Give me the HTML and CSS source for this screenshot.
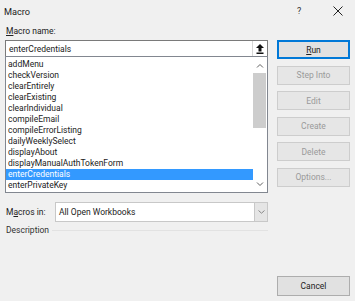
FILE: index.html
```html
<!DOCTYPE html>
<html>
<head>
<meta charset="utf-8">
<link rel="stylesheet" href="styles.css">
</head>
<body>
<div class="dialog">
  <div class="titlebar">
    <span class="title">Macro</span>
    <span class="help">?</span>
    <span class="close">
      <svg width="10" height="10" viewBox="0 0 10 10"><path d="M0.5 0.5 L9.5 9.5 M9.5 0.5 L0.5 9.5" stroke="#222" stroke-width="1" fill="none"/></svg>
    </span>
  </div>
  <div class="body">
    <div class="left">
      <div class="label"><u>M</u>acro name:</div>
      <div class="textbox">
        <span class="tb-text">enterCredentials</span>
        <span class="tb-btn">
          <svg width="8" height="10" viewBox="0 0 8 10"><path d="M4 0 L8 4 L5.5 4 L5.5 7.5 L2.5 7.5 L2.5 4 L0 4 Z" fill="#111"/><rect x="0.5" y="8.5" width="7" height="1.5" fill="#111"/></svg>
        </span>
      </div>
      <div class="list">
        <ul class="items">
          <li>addMenu</li>
          <li>checkVersion</li>
          <li>clearEntirely</li>
          <li>clearExisting</li>
          <li>clearIndividual</li>
          <li>compileEmail</li>
          <li>compileErrorListing</li>
          <li>dailyWeeklySelect</li>
          <li>displayAbout</li>
          <li>displayManualAuthTokenForm</li>
          <li class="sel">enterCredentials</li>
          <li>enterPrivateKey</li>
        </ul>
        <div class="scroll">
          <svg class="arrow" width="8" height="5" viewBox="0 0 8 5"><path d="M1 4.5 L4 1.5 L7 4.5" stroke="#606060" stroke-width="1" fill="none"/></svg>
          <div class="track"><div class="thumb"></div></div>
          <svg class="arrow" width="8" height="5" viewBox="0 0 8 5"><path d="M1 0.5 L4 3.5 L7 0.5" stroke="#606060" stroke-width="1" fill="none"/></svg>
        </div>
      </div>
      <div class="inrow">
        <span class="inlabel">M<u>a</u>cros in:</span>
        <div class="select">
          <span class="sel-text">All Open Workbooks</span>
          <span class="sel-btn">
            <svg width="7" height="4" viewBox="0 0 7 4"><path d="M0.5 0.5 L3.5 3.2 L6.5 0.5" stroke="#888" stroke-width="1" fill="none"/></svg>
          </span>
        </div>
      </div>
      <div class="desc">
        <span>Description</span>
        <span class="rule"></span>
      </div>
    </div>
    <div class="right">
      <div class="btn default"><span><u>R</u>un</span></div>
      <div class="btn disabled">Step Into</div>
      <div class="btn disabled">Edit</div>
      <div class="btn disabled">Create</div>
      <div class="btn disabled">Delete</div>
      <div class="btn disabled">Options...</div>
      <div class="btn cancel">Cancel</div>
    </div>
  </div>
</div>
</body>
</html>
```
FILE: styles.css
```css
* { box-sizing: border-box; }
html, body {
  margin: 0;
  padding: 0;
  background: #f0f0f0;
}
body {
  font-family: Roboto, "Open Sans", "DejaVu Sans", sans-serif;
  font-size: 8.5px;
  color: #222;
}
.dialog {
  width: 355px;
  height: 301px;
  display: flex;
  flex-direction: column;
}
.titlebar {
  height: 22px;
  display: flex;
  align-items: center;
  padding-left: 4px;
  font-size: 9.2px;
}
.title { flex: 1; }
.help {
  width: 10px;
  margin-right: 26px;
  color: #333;
  font-size: 9px;
}
.close {
  width: 22px;
  display: flex;
  align-items: center;
}
.body {
  flex: 1;
  display: flex;
  padding-left: 5px;
}
.left {
  width: 263px;
  display: flex;
  flex-direction: column;
}
.label {
  height: 18px;
  padding-left: 1px;
  line-height: 18px;
}
.textbox {
  height: 16px;
  border: 1px solid #7a7a7a;
  border-bottom: none;
  background: #fff;
  display: flex;
  align-items: center;
  padding-left: 3px;
}
.tb-text { flex: 1; }
.tb-btn {
  width: 15px;
  height: 15px;
  border-left: 1px solid #d6d6d6;
  display: flex;
  align-items: center;
  justify-content: center;
}
.list {
  height: 137px;
  border: 1px solid #828790;
  background: #fff;
  display: flex;
}
.items {
  list-style: none;
  margin: 0;
  padding: 2px 0 0 0;
  flex: 1;
}
.items li {
  height: 11px;
  line-height: 11px;
  padding-left: 2px;
  white-space: nowrap;
}
.items li.sel {
  background: #3399ff;
  color: #fff;
}
.scroll {
  width: 14px;
  display: flex;
  flex-direction: column;
  align-items: center;
  background: #fff;
}
.scroll .arrow {
  margin: 6px 0 5px;
}
.track {
  flex: 1;
  width: 100%;
}
.thumb {
  width: 13px;
  height: 55px;
  background: #cdcdcd;
}
.inrow {
  margin-top: 9px;
  display: flex;
  align-items: center;
  height: 20px;
}
.inlabel {
  width: 50px;
  padding-left: 1px;
}
.select {
  flex: 1;
  height: 20px;
  border: 1px solid #c8c8c8;
  background: #fff;
  display: flex;
  align-items: center;
  padding-left: 3px;
}
.sel-text { flex: 1; }
.sel-btn {
  width: 13px;
  height: 18px;
  background: #e5e5e5;
  border-left: 1px solid #c8c8c8;
  display: flex;
  align-items: center;
  justify-content: center;
}
.desc {
  margin-top: 1px;
  height: 14px;
  display: flex;
  align-items: center;
  color: #333;
  padding-left: 1px;
}
.rule {
  flex: 1;
  height: 1px;
  background: #e2e2e2;
  margin-left: 3px;
}
.right {
  width: 73px;
  margin-left: 9px;
  padding-top: 18px;
  padding-bottom: 5px;
  display: flex;
  flex-direction: column;
  gap: 6.5px;
}
.btn {
  height: 19px;
  background: #e1e1e1;
  border: 1px solid #adadad;
  display: flex;
  align-items: center;
  justify-content: center;
}
.btn.default {
  border: 1px solid #0078d7;
  box-shadow: inset 0 0 0 1px #0078d7;
}
.btn.disabled {
  background: #e6e6e6;
  border-color: #cdcdcd;
  color: #9a9a9a;
}
.btn.cancel {
  margin-top: auto;
  height: 20px;
}
```
